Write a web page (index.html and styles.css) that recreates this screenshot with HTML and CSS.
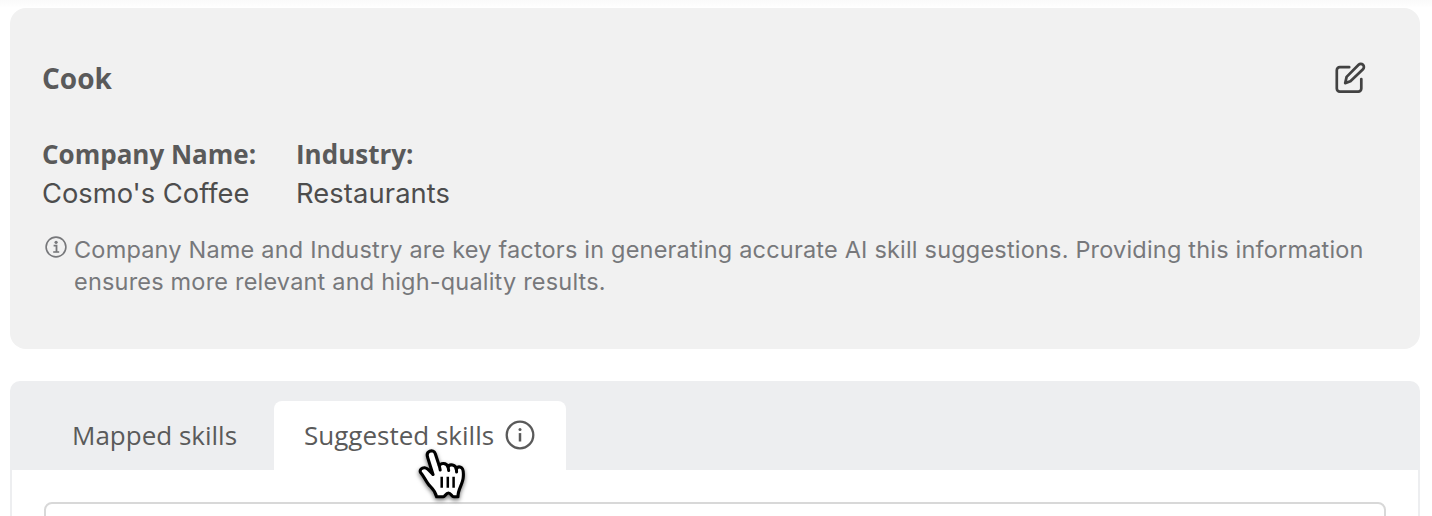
FILE: index.html
```html
<!DOCTYPE html>
<html lang="en">
<head>
<meta charset="utf-8">
<title>Cook</title>
<link rel="stylesheet" href="styles.css">
</head>
<body>
<main class="page">
  <section class="job-card">
    <header class="job-header">
      <h1 class="job-title">Cook</h1>
      <button class="edit-button" aria-label="Edit">
        <svg width="34" height="34" viewBox="0 0 34 34" fill="none" stroke="#424242" stroke-width="2.7" stroke-linecap="round" stroke-linejoin="round">
          <path d="M16.2 6.2H6.8a3 3 0 0 0-3 3v18.4a3 3 0 0 0 3 3h18.5a3 3 0 0 0 3-3V18"/>
          <path d="M25.6 3.8a3.1 3.1 0 0 1 4.4 4.4L17.4 20.3l-5.2 1.8 1.4-6.2z"/>
        </svg>
      </button>
    </header>
    <dl class="details">
      <div class="detail company"><dt>Company Name:</dt><dd>Cosmo's Coffee</dd></div>
      <div class="detail industry"><dt>Industry:</dt><dd>Restaurants</dd></div>
    </dl>
    <div class="note">
      <svg class="note-icon" width="22" height="22" viewBox="0 0 22 22" fill="none" stroke="#77787b" stroke-width="1.6">
        <circle cx="11" cy="11" r="9.9"/>
        <path d="M8.6 9.7h2.9v6.2" stroke-width="1.8"/>
        <path d="M8.2 16h6" stroke-width="1.6"/>
        <circle cx="11.1" cy="6.3" r="1.6" fill="#77787b" stroke="none"/>
      </svg>
      <p class="note-text">Company Name and Industry are key factors in generating accurate AI skill suggestions. Providing this information<br>ensures more relevant and high-quality results.</p>
    </div>
  </section>
  <section class="skills">
    <nav class="tabs">
      <a class="tab mapped">Mapped skills</a>
      <a class="tab active"><span>Suggested skills</span>
        <svg width="30" height="30" viewBox="0 0 30 30" fill="none" stroke="#5a5a5a" stroke-width="2.3">
          <circle cx="15" cy="15" r="13.3"/>
          <path d="M15 13.1v8.4" stroke-width="2.5"/>
          <circle cx="15" cy="9.6" r="1.5" fill="#5a5a5a" stroke="none"/>
        </svg>
      </a>
    </nav>
    <div class="panel"><div class="skill-box"></div></div>
  </section>
</main>
<svg class="cursor" width="56" height="60" viewBox="0 0 56 60">
  <path d="M17.8 6.2C15 7.4 14.8 10 15.7 12.6L21 29.5C18.5 27.4 16.2 23 12.7 22.7C9.7 22.5 7.5 24.8 8.4 27.2C11.8 31 13.3 35.5 16.6 39.5C19 42.4 23 44.8 24.6 51.8H31.4C33 51.8 33.8 48 36.5 48C39 48 39.6 51.8 41.8 51.8H46C45.5 44.8 51 39 51.3 31.7C51.5 28.2 52 23.3 48.6 22.2C46.5 21.5 45 22.7 44.3 24.3C44 19.4 37.4 18.6 36.1 22C34.4 17.3 28.5 17.7 27.3 21L23.3 8.7C22.4 6.2 20 5.3 17.8 6.2Z" fill="#fff" stroke="#000" stroke-width="3.1" stroke-linejoin="round"/>
  <path d="M27.3 20.5L28.2 25M36 21.5L36.7 25.5M44.3 23.5L44.6 27" fill="none" stroke="#000" stroke-width="3" stroke-linecap="round"/>
  <path d="M29.7 31.7v11M35.8 31.7v11M41.6 31.7v11" fill="none" stroke="#000" stroke-width="2.5"/>
</svg>
</body>
</html>
```
FILE: styles.css
```css
* { box-sizing: border-box; }
body { margin: 0; height: 516px; overflow: hidden; background: linear-gradient(#fafafa, #fff 8px); color: #5a5a5a; font-family: "Open Sans", sans-serif; }
.page { padding: 8px 12px 0 10px; }
.job-card { height: 341px; padding: 47px 53px 0 32px; border-radius: 16px; background: #f1f1f1; }
.job-header { display: flex; justify-content: space-between; height: 46px; }
.job-title { margin: 0; font-size: 28px; line-height: 46px; font-weight: 700; }
.edit-button { display: flex; align-items: center; height: 46px; padding: 0; border: 0; background: none; }
.details { display: flex; gap: 40px; margin: 34px 0 0; }
.detail { white-space: nowrap; }
.company { width: 214px; }
dt { font-size: 26px; line-height: 38px; font-weight: 700; }
dd { margin: 0; color: #4d4d4d; font-family: Inter, sans-serif; font-size: 27.3px; line-height: 41px; }
.industry dd { letter-spacing: .12px; }
.note { display: flex; gap: 7px; margin-top: 20px; padding-left: 3px; color: #77787b; }
.note-icon { flex: none; margin-top: 2px; }
.note-text { margin: 0; font-family: Inter, sans-serif; font-size: 23.5px; line-height: 32px; letter-spacing: .192px; white-space: nowrap; }
.skills { margin-top: 32px; border-radius: 10px 10px 0 0; background: #edeef0; }
.tabs { display: flex; height: 89px; padding: 20px 32px 0; }
.tab { display: flex; align-items: center; height: 69px; padding: 0 30px 2px; border-radius: 8px 8px 0 0; font-size: 26px; white-space: nowrap; }
.mapped { width: 232px; }
.active { width: 292px; padding-right: 31px; justify-content: space-between; background: #fff; }
.panel { height: 46px; padding: 32px 32px 0; overflow: hidden; border: solid #edeef0; border-width: 0 2px; background: #fff; }
.skill-box { height: 60px; border: 2px solid #d8d8d8; border-radius: 8px; }
.cursor { position: absolute; left: 412px; top: 445px; filter: drop-shadow(0 2px 2px rgba(0,0,0,.55)); }
```
